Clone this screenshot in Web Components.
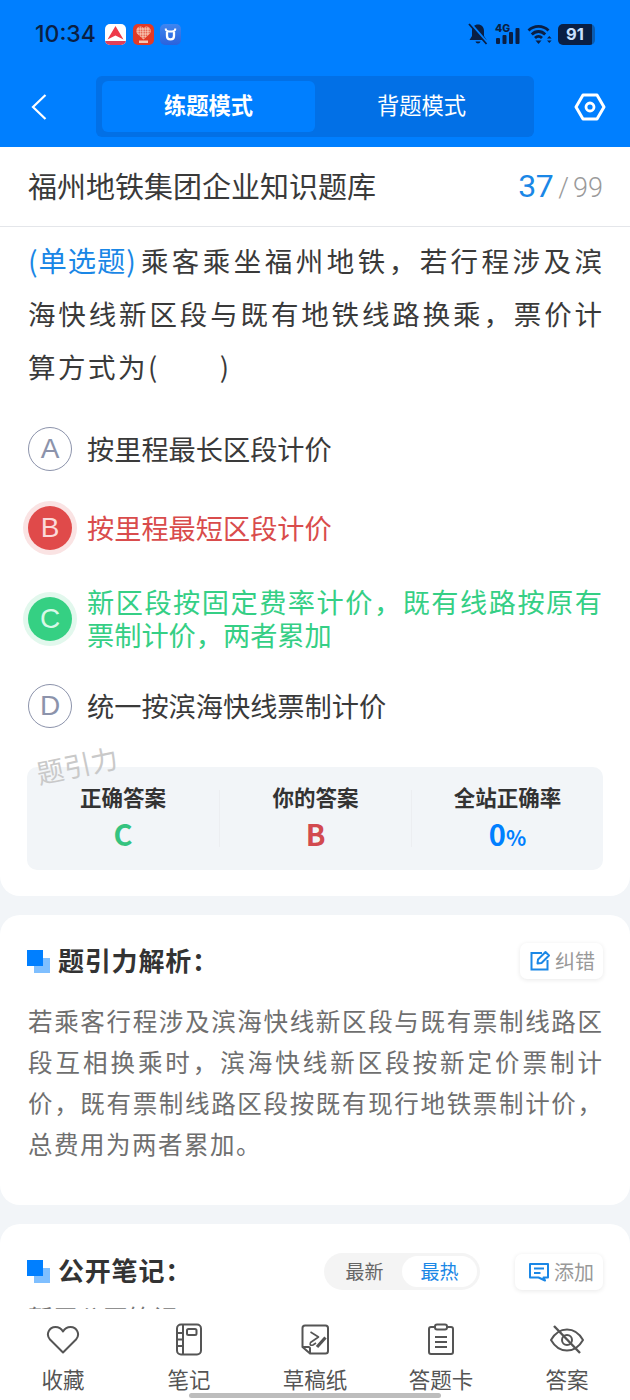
<!DOCTYPE html>
<html lang="zh"><head><meta charset="utf-8">
<style>
html,body{margin:0;padding:0;background:#f2f5f8}
body{width:630px;height:1400px;overflow:hidden;position:relative;font-family:"Noto Sans CJK SC","Noto Sans",sans-serif;color:#333}
</style></head><body>
<quiz-header></quiz-header>
<quiz-title></quiz-title>
<quiz-question></quiz-question>
<quiz-analysis></quiz-analysis>
<quiz-notes></quiz-notes>
<quiz-nav></quiz-nav>
<script>
function def(name,html){customElements.define(name,class extends HTMLElement{constructor(){super();this.attachShadow({mode:'open'}).innerHTML=html}})}
const F='"Noto Sans CJK SC","Noto Sans",sans-serif';
def('quiz-header',`<style>
:host{display:block;height:147px;background:#007fff;box-sizing:border-box;padding-top:18px}
.st{display:flex;align-items:center;height:32px;padding:0 35px}
.time{font:500 23px/32px Inter,Roboto,sans-serif;color:#0a1f44;width:70px}
.ic{width:21px;height:21px;margin-right:6.500px;display:block}
.r{margin-left:auto;display:flex;align-items:center}
.bar{display:flex;align-items:center;height:61px;margin-top:26px;padding:0 24px 0 30px}
.seg{margin-left:48px;width:438px;height:61px;background:#0270e6;border-radius:6px;box-sizing:border-box;padding:5px 6px;display:flex}
.seg div{flex:1;display:flex;align-items:center;justify-content:center;font:400 22.300px/1 ${F};color:#fff;border-radius:6px;padding-bottom:4px;box-sizing:border-box}
.seg .on{background:#007fff;font-weight:700}
.back{width:18px;height:28px;display:block}
.gear{margin-left:auto;display:block}
</style>
<div class="st"><span class="time">10:34</span>
<svg class="ic" viewBox="0 0 21 21"><defs><clipPath id="c1"><rect width="21" height="21" rx="5"/></clipPath></defs><g clip-path="url(#c1)"><rect width="21" height="21" fill="#fff"/><path d="M2.500 15.500 10.500 2 18.500 15.500 10.500 11.500Z" fill="#ee3a4a"/><path d="M0 17H21V21H0Z" fill="#e0405a"/></g></svg>
<svg class="ic" viewBox="0 0 21 21"><defs><clipPath id="c2"><rect width="21" height="21" rx="5"/></clipPath><pattern id="d" width="2.500" height="2.500" patternUnits="userSpaceOnUse"><circle cx="1.200" cy="1.200" r=".8" fill="#e23a26"/></pattern></defs><g clip-path="url(#c2)"><rect width="21" height="21" fill="#e23a26"/><path d="M10.500 15.500 4 9.500C2 6 4.500 2.500 7.500 2.500 9 2.500 10 3.300 10.500 4.200 11 3.300 12 2.500 13.500 2.500 16.500 2.500 19 6 17 9.500Z" fill="#f6c8b4"/><path d="M10.500 15.500 4 9.500C2 6 4.500 2.500 7.500 2.500 9 2.500 10 3.300 10.500 4.200 11 3.300 12 2.500 13.500 2.500 16.500 2.500 19 6 17 9.500Z" fill="url(#d)"/><rect x="6" y="16.500" width="9" height="2.500" fill="#f6c8b4"/></g></svg>
<svg class="ic" viewBox="0 0 21 21"><defs><linearGradient id="g3" x1="0" y1="0" x2="0" y2="1"><stop offset="0" stop-color="#3f86f0"/><stop offset="1" stop-color="#2a62dc"/></linearGradient></defs><rect width="21" height="21" rx="5" fill="url(#g3)"/><path d="M7 8V12C7 16.500 14 16.500 14 12V8" fill="none" stroke="#fff" stroke-width="2.300"/><path d="M5.500 4.500Q6 7.500 9 7.500H12Q15 7.500 15.500 4.500" fill="none" stroke="#fff" stroke-width="1.800"/></svg>
<div class="r">
<svg width="22" height="22" viewBox="0 0 22 22" fill="#0a1f44"><path d="M11 1.500C7.500 1.500 5 4 5 8V13L2.500 17H19.500L17 13V8C17 4 14.500 1.500 11 1.500ZM8.500 18.500C9 21 13 21 13.500 18.500Z"/><path d="M3.500 .5 21 20.500" stroke="#007fff" stroke-width="2.500"/><path d="M2 1 19.500 21" stroke="#0a1f44" stroke-width="1.800"/></svg>
<svg width="25" height="22" viewBox="0 0 25 22" style="margin-left:6px;overflow:visible" fill="#0a1f44"><rect x="1" y="15" width="4" height="6" rx="1"/><rect x="7.500" y="12" width="4" height="9" rx="1"/><rect x="14" y="9" width="4" height="12" rx="1"/><rect x="20.500" y="5" width="4" height="16" rx="1"/><text x="0" y="9" font-family="Inter,sans-serif" font-size="10.500" font-weight="800">4G</text></svg>
<svg width="26" height="22" viewBox="0 0 26 22" style="margin-left:7px" fill="none" stroke="#0a1f44" stroke-width="2.800"><path d="M1.500 7.500C7 2 16 2 21.500 7.500M4.800 11.500C8.500 7.500 14.500 7.500 18.200 11.500M8 15C10 13 13 13 15 15"/><path d="M8.500 17.500H14.500L11.500 21Z" fill="#0a1f44" stroke="none"/><path d="M20 15.500 22.300 13 24.600 15.500ZM20 17.500H24.600L22.300 20Z" fill="#0a1f44" stroke="none"/></svg>
<span style="margin-left:5px;display:flex;align-items:center;width:37px;height:21px;border-radius:5px;background:linear-gradient(90deg,#0a1f44 91%,#0a5bb0 91%);color:#c9e1ff;font:700 16.500px/21px Inter,sans-serif;justify-content:center;box-sizing:border-box;padding-right:3px">91</span>
</div></div>
<div class="bar">
<svg class="back" viewBox="0 0 18 28"><path d="M15.500 2 3 14 15.500 26" fill="none" stroke="#fff" stroke-width="2.200"/></svg>
<div class="seg"><div class="on">练题模式</div><div>背题模式</div></div>
<svg class="gear" width="32" height="28" viewBox="0 0 32 28"><path d="M9 2H23L30 14 23 26H9L2 14Z" fill="none" stroke="#fff" stroke-width="3" stroke-linejoin="round"/><circle cx="16" cy="14" r="4" fill="none" stroke="#fff" stroke-width="2.800"/></svg>
</div>`);
def('quiz-title',`<style>
:host{display:flex;align-items:center;height:80px;background:#fff;border-bottom:1px solid #e4e6ea;padding:0 27px 2px 28px;box-sizing:border-box}
.t{font:400 29px/1 ${F};color:#3a3a3a}
.c{margin-left:auto;font:300 27px/1 Roboto,${F};color:#9a9a9a;display:flex;align-items:baseline;gap:4px}
b{font:400 32px/1 Roboto,${F};color:#1a87e6;letter-spacing:-.5px;margin-right:1px}
</style><span class="t">福州地铁集团企业知识题库</span><span class="c"><b>37</b>/<span>99</span></span>`);
def('quiz-option',`<style>
:host{display:flex;align-items:center;gap:15px;color:#3a3a3a;padding-left:5px}
.o{flex:none;width:44px;height:44px;border-radius:50%;box-sizing:border-box;border:1.500px solid #8c93ab;color:#8c93ab;display:flex;align-items:center;justify-content:center;font:400 28px/1 "Liberation Sans",sans-serif}
.t{flex:1;font:400 27.200px/33px ${F};text-align:justify;margin-bottom:2px}
:host([s=wrong]){color:#d94c4c}:host([s=right]){color:#35cf85}
:host([s=wrong]) .o{background:#e04a4a;border:0;color:#fbdada;box-shadow:0 0 0 5px #fae3e3}
:host([s=right]) .o{background:#35d083;border:0;color:#d9f8e8;box-shadow:0 0 0 5px #e2f8ed}
</style><span class="o"><slot name="l"></slot></span><span class="t"><slot></slot></span>`);
def('quiz-question',`<style>
:host{display:block;background:#fff;border-radius:0 0 20px 20px;padding:6px 28px 27px;height:669px;box-sizing:border-box;position:relative}
.q{font:400 27.500px/53px ${F};letter-spacing:2.500px;text-align:justify;color:#3a3a3a;margin:0 -2.500px 0 0}
.q span{color:#1a87e6;letter-spacing:0;font-size:28.300px;margin-right:4px}
.ops{display:flex;flex-direction:column;margin:33px 0 0 -5px}
.ops quiz-option:nth-child(1){height:46px}
.ops quiz-option:nth-child(2){height:46px;margin-top:33px}
.ops quiz-option:nth-child(3){height:66px;margin-top:35px}
.ops quiz-option:nth-child(4){height:46px;margin-top:31px}
.wm{position:absolute;left:36px;top:524px;font:400 27px/1 ${F};color:#c9c9c9;transform:rotate(-12deg);letter-spacing:.5px}
.sum{margin:38px -1px 0;height:103px;background:#f2f5f8;border-radius:10px;display:grid;grid-template-columns:repeat(3,1fr);align-items:center}
.sum>div{text-align:center;height:57px;position:relative}
.sum>div+div{border-left:1px solid #eceef1}
.l{font:700 21.500px/1 ${F};color:#333;margin-top:-4px}
.v{font:700 29px/1 ${F};margin-top:11px}
.v small{font-size:21px}
</style>
<p class="q"><span>(单选题)</span>乘客乘坐福州地铁，若行程涉及滨海快线新区段与既有地铁线路换乘，票价计算方式为(　　)</p>
<div class="ops">
<quiz-option><span slot="l">A</span>按里程最长区段计价</quiz-option>
<quiz-option s="wrong"><span slot="l">B</span>按里程最短区段计价</quiz-option>
<quiz-option s="right"><span slot="l">C</span>新区段按固定费率计价，既有线路按原有票制计价，两者累加</quiz-option>
<quiz-option><span slot="l">D</span>统一按滨海快线票制计价</quiz-option>
</div>
<div class="wm">题引力</div>
<div class="sum">
<div><div class="l">正确答案</div><div class="v" style="color:#35c37f">C</div></div>
<div><div class="l">你的答案</div><div class="v" style="color:#d24a4f">B</div></div>
<div><div class="l">全站正确率</div><div class="v" style="color:#007fff">0<small>%</small></div></div>
</div>`);
def('sec-head',`<style>
:host{display:flex;align-items:center}
.m{width:23px;height:23px;position:relative;flex:none;margin:0 7px 0 -1px}
.m i{position:absolute}
.m .a{left:7px;top:8px;width:16px;height:15px;background:#7fbfff}
.m .b{left:0;top:0;width:16px;height:16px;background:#007fff}
.t{font:700 26px/1 ${F};color:#333;letter-spacing:.8px;margin-bottom:3px;padding-left:1px}
.r{margin-left:auto;display:flex;align-items:center;gap:35px;margin-right:-1px}
</style><span class="m"><i class="a"></i><i class="b"></i></span><span class="t"><slot></slot></span><span class="r"><slot name="r"></slot></span>`);
def('mini-btn',`<style>
:host{display:inline-flex;align-items:center;gap:4px;height:36px;padding:0 8px 0 9px;background:#fff;border-radius:7px;box-shadow:0 1px 5px rgba(0,0,0,.09);font:400 20px/1 ${F};color:#999}
</style><slot name="i"></slot><slot></slot>`);
def('quiz-analysis',`<style>
:host{display:block;background:#fff;border-radius:20px;margin-top:19px;padding:28px 28px 0;height:290px;box-sizing:border-box}
p{margin:21px -1.500px 0 0;font:400 24.500px/41px ${F};color:#6f6f6f;text-align:justify;letter-spacing:1.500px}
</style><sec-head>题引力解析：<mini-btn slot="r"><svg slot="i" width="22" height="22" viewBox="0 0 22 22" fill="none" stroke="#1a87e6" stroke-width="2"><path d="M13 3H2.500V19.500H18.500V10"/><path d="M8.500 13.500 9 9.500 16.500 2 20 5.500 12.500 13Z" stroke-linejoin="round"/></svg>纠错</mini-btn></sec-head>
<p>若乘客行程涉及滨海快线新区段与既有票制线路区段互相换乘时，滨海快线新区段按新定价票制计价，既有票制线路区段按既有现行地铁票制计价，总费用为两者累加。</p>`);
def('quiz-notes',`<style>
:host{display:block;background:#fff;border-radius:20px 20px 0 0;margin-top:19px;padding:29px 28px 0;height:200px;box-sizing:border-box}
.tabs{display:flex;align-items:center;width:156px;height:37px;background:#f4f4f4;border-radius:19px;box-sizing:border-box;padding:3px;font:400 19px/1 ${F};color:#666}
.tabs span{flex:1;text-align:center;height:31px;line-height:30px;border-radius:16px}
.tabs .on{background:#fff;color:#1a87e6;flex:0 0 75px}
.n{margin-top:15px;font:400 25px/1 ${F};color:#777}
</style><sec-head>公开笔记：<div slot="r" class="tabs"><span>最新</span><span class="on">最热</span></div><mini-btn slot="r" style="padding:0 9px 0 13px;gap:4px"><svg slot="i" width="22" height="20" viewBox="0 0 22 20" fill="none" stroke="#1a87e6" stroke-width="2"><path d="M2 2H20V15.500H15.500L17 18.500 10.500 15.500H2Z" stroke-linejoin="round"/><path d="M6 6.500H16M6 11H12.500"/></svg>添加</mini-btn></sec-head><div class="n">暂无公开笔记</div>`);
def('nav-item',`<style>
:host{display:flex;flex-direction:column;align-items:center;width:100px;font:400 21.500px/1 ${F};color:#555}
.i{height:33px;display:flex;align-items:center;justify-content:center;margin-bottom:12px}
</style><span class="i"><slot name="i"></slot></span><slot></slot>`);
def('quiz-nav',`<style>
:host{position:absolute;left:0;right:0;top:1309px;height:91px;background:#fff;display:flex;justify-content:space-between;padding:14px 13px 0;box-sizing:border-box}
.h{position:absolute;left:189px;top:84px;width:252px;height:5px;border-radius:3px;background:#bdbdbd}
svg{fill:none;stroke:#555;stroke-width:2;display:block}
</style>
<nav-item><svg slot="i" width="34" height="30" viewBox="0 0 34 30"><path d="M17 27.500 4 14.500C-.5 9.500 3 2 9.500 2 13 2 15.500 4 17 6.500 18.500 4 21 2 24.500 2 31 2 34.500 9.500 30 14.500Z" stroke-linejoin="round"/></svg>收藏</nav-item>
<nav-item><svg slot="i" width="28" height="33" viewBox="0 0 28 33"><rect x="2" y="1.500" width="24" height="30" rx="4"/><path d="M8 1.500V31.500M2 10H8M2 16.500H8M2 23H8"/><rect x="12" y="6" width="9.500" height="6" rx="1.500"/></svg>笔记</nav-item>
<nav-item><svg slot="i" width="28" height="31" viewBox="0 0 28 31" stroke-linejoin="round"><path d="M4 1.500H24.500Q27 1.500 27 4V27Q27 29.500 24.500 29.500H9L1.500 23V4Q1.500 1.500 4 1.500Z"/><path d="M1.500 23H7.500Q9 23 9 24.500V29.500"/><path d="M9.500 8 17.500 13 9.500 18.500Q8 22 12 21L15 19" stroke-width="1.600"/><path d="M16 23 24.500 13.500" stroke-width="3.200"/></svg>草稿纸</nav-item>
<nav-item><svg slot="i" width="28" height="33" viewBox="0 0 28 33"><path d="M8 4H4Q2 4 2 6V29Q2 31 4 31H24Q26 31 26 29V6Q26 4 24 4H20"/><rect x="8" y="1.500" width="12" height="5" rx="2"/><path d="M8 14H20M8 19H20M8 24H20"/></svg>答题卡</nav-item>
<nav-item><svg slot="i" width="36" height="30" viewBox="0 0 36 30"><path d="M2 15C6 8 11 4.500 18 4.500S30 8 34 15C30 22 25 25.500 18 25.500S6 22 2 15Z" stroke-linejoin="round"/><circle cx="18" cy="15" r="5"/><path d="M5 1 31 28" stroke-width="2.400"/></svg>答案</nav-item>
<div class="h"></div>`);
</script>
</body></html>
